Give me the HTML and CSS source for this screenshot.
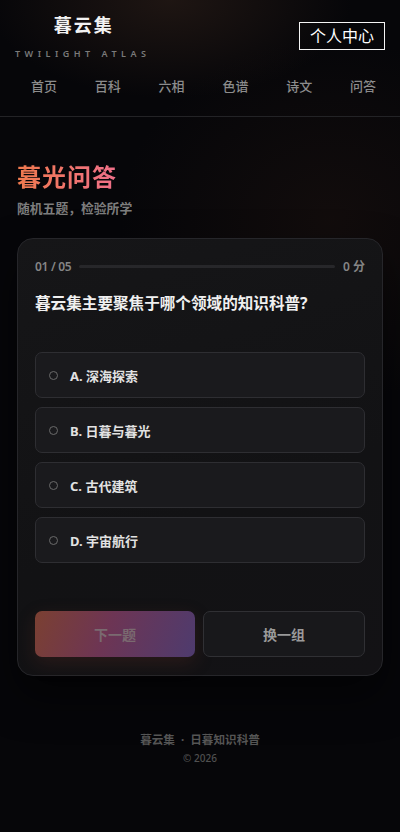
FILE: index.html
```html
<!DOCTYPE html>
<html lang="zh">
<head>
<meta charset="utf-8">
<title>暮光问答 - 暮云集</title>
<link rel="stylesheet" href="styles.css">
</head>
<body>
<div class="page">
  <header class="header">
    <div class="top">
      <div class="logo">
        <div class="logo-name">暮云集</div>
        <div class="logo-sub">TWILIGHT ATLAS</div>
      </div>
      <button class="user-btn">个人中心</button>
    </div>
    <nav class="nav">
      <a>首页</a><a>百科</a><a>六相</a><a>色谱</a><a>诗文</a><a>问答</a>
    </nav>
  </header>

  <main class="main">
    <h1 class="title">暮光问答</h1>
    <p class="subtitle">随机五题，检验所学</p>

    <section class="card">
      <div class="progress">
        <span class="count">01 / 05</span>
        <div class="bar"><div class="bar-fill" style="width:0%"></div></div>
        <span class="score">0 分</span>
      </div>
      <h2 class="question">暮云集主要聚焦于哪个领域的知识科普?</h2>
      <div class="options">
        <div class="option"><span class="radio"></span><span>A. 深海探索</span></div>
        <div class="option"><span class="radio"></span><span>B. 日暮与暮光</span></div>
        <div class="option"><span class="radio"></span><span>C. 古代建筑</span></div>
        <div class="option"><span class="radio"></span><span>D. 宇宙航行</span></div>
      </div>
      <div class="actions">
        <button class="btn btn-next">下一题</button>
        <button class="btn btn-swap">换一组</button>
      </div>
    </section>
  </main>

  <footer class="footer">
    <div class="foot-main">暮云集 &nbsp;·&nbsp; 日暮知识科普</div>
    <div class="foot-copy">© 2026</div>
  </footer>
</div>
</body>
</html>
```

FILE: styles.css
```css
* { box-sizing: border-box; }
html, body { margin: 0; padding: 0; }
body {
  background: #060609;
  font-family: "Noto Sans", "Noto Sans CJK SC", sans-serif;
  color: #fff;
}
.page {
  min-height: 832px;
  background:
    radial-gradient(ellipse 260px 140px at 170px 0px, rgba(60, 40, 30, 0.45), transparent 70%),
    radial-gradient(ellipse 300px 260px at 330px 220px, rgba(40, 24, 18, 0.35), transparent 70%),
    #060609;
}
.header {
  border-bottom: 1px solid #232326;
  padding: 13px 15px 0;
}
.top {
  display: flex;
  justify-content: space-between;
  align-items: flex-start;
}
.logo {
  display: flex;
  flex-direction: column;
  align-items: center;
}
.logo-name {
  font-size: 18px;
  font-weight: 700;
  letter-spacing: 2px;
  line-height: 24px;
  color: #f2f2f2;
  padding-left: 2px;
}
.logo-sub {
  font-size: 9px;
  font-weight: 600;
  letter-spacing: 4.5px;
  color: #7a7a7a;
  line-height: 12px;
  margin-top: 11px;
}
.user-btn {
  margin-top: 9px;
  background: transparent;
  border: 1.5px solid #f4f4f4;
  color: #fff;
  font-family: inherit;
  font-size: 16px;
  line-height: 22px;
  padding: 2px 9px 2px;
  width: 86px;
  height: 28px;
  border-radius: 0;
}
.nav {
  display: flex;
  justify-content: space-between;
  padding: 0 9px 0 16px;
  margin-top: 16px;
  height: 40px;
}
.nav a {
  font-size: 13px;
  font-weight: 500;
  color: #8c8c8c;
  line-height: 20px;
}
.main {
  padding: 0 17px;
}
.title {
  margin: 44px 0 0;
  font-size: 24px;
  font-weight: 700;
  line-height: 32px;
  letter-spacing: 1px;
  background: linear-gradient(90deg, #f07a4e, #f0708a);
  -webkit-background-clip: text;
  background-clip: text;
  color: transparent;
  display: inline-block;
}
.subtitle {
  margin: 6px 0 0;
  font-size: 12.8px;
  font-weight: 700;
  color: #7d7d7d;
  line-height: 18px;
}
.card {
  margin-top: 21px;
  border: 1px solid #26262a;
  border-radius: 16px;
  background: linear-gradient(160deg, #161618, #121214 60%, #131215);
  padding: 17px 17px 18px;
  box-shadow: 0 20px 40px rgba(0,0,0,0.5);
}
.progress {
  display: flex;
  align-items: center;
  gap: 8px;
  height: 20px;
}
.count, .score {
  font-size: 12px;
  font-weight: 600;
  color: #858585;
}
.count { letter-spacing: -0.3px; }
.bar {
  flex: 1;
  height: 3px;
  border-radius: 2px;
  background: #27272a;
}
.bar-fill { height: 100%; background: #f07a4e; border-radius: 2px; }
.question {
  margin: 15px 0 0;
  font-size: 15.6px;
  font-weight: 700;
  color: #f0f0f0;
  line-height: 24px;
}
.options {
  margin-top: 37px;
  display: flex;
  flex-direction: column;
  gap: 9px;
}
.option {
  height: 46px;
  border: 1px solid #2e2e32;
  border-radius: 7px;
  background: #1a1a1d;
  display: flex;
  align-items: center;
  padding-left: 13px;
  gap: 12px;
  font-size: 13px;
  font-weight: 700;
  color: #e2e2e2;
}
.radio {
  width: 9px;
  height: 9px;
  border: 1px solid #6a6a6a;
  border-radius: 50%;
}
.actions {
  margin-top: 48px;
  display: flex;
  gap: 8px;
}
.btn {
  height: 46px;
  border-radius: 7px;
  font-family: inherit;
  font-size: 14px;
  font-weight: 700;
}
.btn-next {
  width: 160px;
  border: none;
  color: #7a6a70;
  background: linear-gradient(110deg, #7b4032 0%, #6d3554 45%, #4e3b6e 100%);
  box-shadow: 0 6px 18px rgba(110, 50, 40, 0.25);
}
.btn-swap {
  flex: 1;
  border: 1px solid #303034;
  background: #18181b;
  color: #9a9a9a;
}
.footer {
  text-align: center;
  padding-top: 56px;
}
.foot-main {
  font-size: 11.6px;
  font-weight: 700;
  color: #555;
  line-height: 16px;
}
.foot-copy {
  margin-top: 3px;
  font-size: 10px;
  font-weight: 500;
  color: #505050;
  line-height: 14px;
}
```
